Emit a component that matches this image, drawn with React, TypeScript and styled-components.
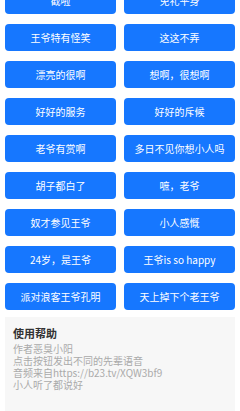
import styled, { createGlobalStyle } from "styled-components";

const sounds = [
  "截啦",
  "免礼平身",
  "王爷特有怪笑",
  "这这不弄",
  "漂亮的很啊",
  "想啊，很想啊",
  "好好的服务",
  "好好的斥候",
  "老爷有赏啊",
  "多日不见你想小人吗",
  "胡子都白了",
  "嗻，老爷",
  "奴才参见王爷",
  "小人感慨",
  "24岁，是王爷",
  "王爷is so happy",
  "派对浪客王爷孔明",
  "天上掉下个老王爷",
];

const helpLines = [
  "作者恶臭小阳",
  "点击按钮发出不同的先辈语音",
  "音频来自https://b23.tv/XQW3bf9",
  "小人听了都说好",
];

export default function App() {
  return (
    <>
      <GlobalStyle />
      <Page>
        <Grid>
          {sounds.map((s) => (
            <SoundButton key={s}>{s}</SoundButton>
          ))}
        </Grid>
        <Help>
          <HelpTitle>使用帮助</HelpTitle>
          {helpLines.map((l) => (
            <HelpLine key={l}>{l}</HelpLine>
          ))}
        </Help>
      </Page>
    </>
  );
}

const GlobalStyle = createGlobalStyle`
  html, body {
    margin: 0;
    padding: 0;
    background: #fff;
    overflow: hidden;
  }
  body {
    font-family: "Noto Sans CJK SC", "Noto Sans", sans-serif;
  }
`;

const Page = styled.div`
  display: flex;
  flex-direction: column;
  gap: 7px;
  height: calc(100vh + 13px);
  padding: 0 5px;
  margin-top: -13px;
  box-sizing: border-box;
  overflow: hidden;
`;

const Grid = styled.div`
  display: grid;
  grid-template-columns: 1fr 1fr;
  column-gap: 8px;
  row-gap: 10px;
`;

const SoundButton = styled.button`
  height: 27px;
  border: none;
  border-radius: 4px;
  background: #1677ff;
  color: #fff;
  font-family: "Noto Sans CJK SC", "Noto Sans", sans-serif;
  font-size: 10px;
  padding: 0;
  white-space: nowrap;
`;

const Help = styled.div`
  flex: 1;
  background: #f7f7f7;
  padding: 8px 8px 0;
`;

const HelpTitle = styled.div`
  font-size: 11px;
  font-weight: 700;
  color: #333;
  line-height: 16px;
  margin-bottom: 2px;
`;

const HelpLine = styled.div`
  font-size: 10px;
  color: #aaa;
  line-height: 12px;
`;
